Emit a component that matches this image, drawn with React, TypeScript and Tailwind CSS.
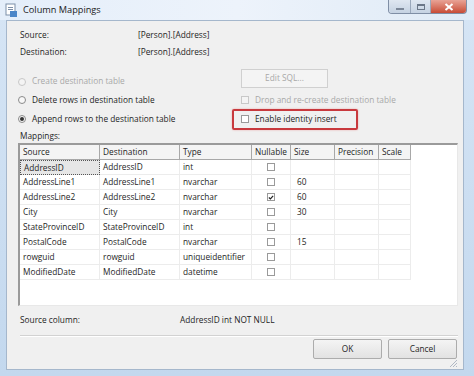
import React from 'react';

const rows = [
  { src: 'AddressID', dst: 'AddressID', type: 'int', nullable: false, size: '' },
  { src: 'AddressLine1', dst: 'AddressLine1', type: 'nvarchar', nullable: false, size: '60' },
  { src: 'AddressLine2', dst: 'AddressLine2', type: 'nvarchar', nullable: true, size: '60' },
  { src: 'City', dst: 'City', type: 'nvarchar', nullable: false, size: '30' },
  { src: 'StateProvinceID', dst: 'StateProvinceID', type: 'int', nullable: false, size: '' },
  { src: 'PostalCode', dst: 'PostalCode', type: 'nvarchar', nullable: false, size: '15' },
  { src: 'rowguid', dst: 'rowguid', type: 'uniqueidentifier', nullable: false, size: '' },
  { src: 'ModifiedDate', dst: 'ModifiedDate', type: 'datetime', nullable: false, size: '' },
];

const cols = 'grid grid-cols-[80px_80px_72px_39px_44px_44px_32px]';

function Radio({ checked, disabled }: { checked?: boolean; disabled?: boolean }) {
  return (
    <span
      className={`flex h-[8px] w-[8px] shrink-0 items-center justify-center rounded-full border ${
        disabled ? 'border-[#c8c8c8] bg-[#f4f4f4]' : 'border-[#8a8a8a] bg-[#f8f8f8]'
      }`}
    >
      {checked && <span className="h-[4px] w-[4px] rounded-full bg-[#333]" />}
    </span>
  );
}

function Check({ checked, disabled }: { checked?: boolean; disabled?: boolean }) {
  return (
    <span
      className={`flex h-[8px] w-[8px] shrink-0 items-center justify-center border ${
        disabled ? 'border-[#c8c8c8] bg-[#f4f4f4]' : 'border-[#9a9a9a] bg-white'
      }`}
    >
      {checked && (
        <svg width="7" height="7" viewBox="0 0 7 7">
          <path d="M1 3.5 L2.8 5.2 L6 1.5" stroke="#222" strokeWidth="1.4" fill="none" />
        </svg>
      )}
    </span>
  );
}

export default function App() {
  return (
    <div
      className="flex h-[376px] w-[474px] flex-col bg-gradient-to-b from-[#d6e5f5] to-[#c3d8ee] text-[8.3px] text-[#1e1e1e]"
      style={{ fontFamily: '"Open Sans", "Noto Sans", sans-serif' }}
    >
      {/* title bar */}
      <div className="flex h-[20px] items-start bg-gradient-to-r from-[#e4eefa] via-[#edf3fb] to-[#dfeaf6]">
        <div className="flex items-center gap-[6px] pl-[5px] pt-[3px]">
          <svg width="12" height="14" viewBox="0 0 12 14">
            <rect x="1" y="1" width="9" height="11" fill="#fff" stroke="#7d8fa8" />
            <rect x="3" y="4" width="5" height="1" fill="#7d8fa8" />
            <rect x="3" y="6" width="5" height="1" fill="#7d8fa8" />
            <rect x="5" y="8" width="7" height="6" fill="#4b86c8" />
          </svg>
          <span className="text-[9.2px] text-[#1a1a1a]">Column Mappings</span>
        </div>
        <div className="ml-auto mr-[7px] flex h-[14px] overflow-hidden rounded-b-[4px] border border-t-0 border-[#7f8ea5]">
          <div className="flex w-[22px] items-center justify-center border-r border-[#9aa8bb] bg-gradient-to-b from-[#dfe7f1] to-[#c5d2e2]">
            <span className="mt-[4px] h-[2px] w-[8px] bg-[#7b8798]" />
          </div>
          <div className="flex w-[20px] items-center justify-center border-r border-[#9aa8bb] bg-gradient-to-b from-[#dfe7f1] to-[#c5d2e2]">
            <span className="h-[6px] w-[8px] border border-t-2 border-[#6b7788]" />
          </div>
          <div className="flex w-[35px] items-center justify-center bg-gradient-to-b from-[#e8a396] to-[#c74a35]">
            <svg width="10" height="8" viewBox="0 0 10 8">
              <path d="M1.5 1 L8.5 7 M8.5 1 L1.5 7" stroke="#fff" strokeWidth="2" />
            </svg>
          </div>
        </div>
      </div>

      {/* client area */}
      <div className="ml-[6px] mr-[10px] flex h-[350px] flex-col border border-[#a5b7cc] bg-[#f0f0f0] pl-[13px] pr-[5px]">
        <div className="mt-[6px] flex h-[17px] items-center">
          <span className="w-[118px]">Source:</span>
          <span>[Person].[Address]</span>
        </div>
        <div className="flex h-[17px] items-center">
          <span className="w-[118px]">Destination:</span>
          <span>[Person].[Address]</span>
        </div>

        <div className="mt-[8px] grid grid-cols-[213px_1fr]">
          <div className="-ml-[2px] flex h-[19px] items-end gap-[6px] pb-[2px] text-[#a8a8a8]">
            <Radio disabled />
            <span className="leading-[10px]">Create destination table</span>
          </div>
          <div className="pl-[8px]">
            <div className="flex h-[19px] w-[87px] items-center justify-center border border-[#d0d0d0] bg-[#f4f4f4] text-[#a8a8a8]">
              Edit SQL...
            </div>
          </div>

          <div className="-ml-[2px] mt-[4px] flex h-[17px] items-center gap-[6px]">
            <Radio />
            <span>Delete rows in destination table</span>
          </div>
          <div className="mt-[4px] flex h-[17px] items-center gap-[6px] pl-[8px] text-[#a8a8a8]">
            <Check disabled />
            <span>Drop and re-create destination table</span>
          </div>

          <div className="-ml-[2px] flex h-[21px] items-center gap-[6px]">
            <Radio checked />
            <span>Append rows to the destination table</span>
          </div>
          <div className="-ml-[1px] flex h-[21px] w-[126px] items-center gap-[6px] rounded-[2px] border-2 border-[#c8393d] pl-[7px] shadow-[0_0_2px_#e8a0a0]">
            <Check />
            <span>Enable identity insert</span>
          </div>
        </div>

        <div className="flex h-[14px] items-center">Mappings:</div>

        {/* mappings grid */}
        <div className="-ml-[2px] h-[165px] w-[440px] border border-t-[2px] border-l-[2px] border-[#9a9a9a] border-b-[#e8e8e8] border-r-[#e8e8e8] bg-white">
          <div className={`${cols} h-[15px]`}>
            {['Source', 'Destination', 'Type', 'Nullable', 'Size', 'Precision', 'Scale'].map((h) => (
              <div key={h} className="flex items-center border border-t-0 border-l-0 border-[#a8a8a8] bg-[#f4f4f4] pl-[3px] leading-none">
                {h}
              </div>
            ))}
          </div>
          {rows.map((r, i) => (
            <div key={r.src} className={`${cols} h-[15px]`}>
              <div
                className={`flex items-center pl-[3px] leading-none ${
                  i === 0 ? 'border border-dotted border-[#555] bg-[#e6e6e6]' : 'border-r border-b border-[#ececec]'
                }`}
              >
                {r.src}
              </div>
              <div className="flex items-center border-r border-b border-[#ececec] pl-[3px] leading-none">{r.dst}</div>
              <div className="flex items-center border-r border-b border-[#ececec] pl-[3px] leading-none">{r.type}</div>
              <div className="flex items-center justify-center border-r border-b border-[#ececec]">
                <Check checked={r.nullable} />
              </div>
              <div className="flex items-center border-r border-b border-[#ececec] pl-[6px] leading-none">{r.size}</div>
              <div className="border-r border-b border-[#ececec]" />
              <div className="border-r border-b border-[#ececec]" />
            </div>
          ))}
        </div>

        <div className="mt-[6px] flex h-[17px] items-center">
          <span className="w-[160px]">Source column:</span>
          <span>AddressID int NOT NULL</span>
        </div>

        <div className="mt-[6px] border-t border-[#d2d2d2] shadow-[0_1px_0_#fff]" />

        <div className="mt-[3px] flex justify-end gap-[6px] pr-[1px]">
          <div className="flex h-[20px] w-[69px] items-center justify-center rounded-[2px] border border-[#acacac] bg-gradient-to-b from-[#f4f4f4] to-[#e2e2e2]">
            OK
          </div>
          <div className="flex h-[20px] w-[69px] items-center justify-center rounded-[2px] border border-[#acacac] bg-gradient-to-b from-[#f4f4f4] to-[#e2e2e2]">
            Cancel
          </div>
        </div>

        <div className="mt-auto flex justify-end pb-[1px]">
          <svg width="9" height="9" viewBox="0 0 9 9">
            <path d="M8 1 L1 8 M8 4 L4 8 M8 7 L7 8" stroke="#b0b8c4" strokeWidth="1" />
          </svg>
        </div>
      </div>
    </div>
  );
}
